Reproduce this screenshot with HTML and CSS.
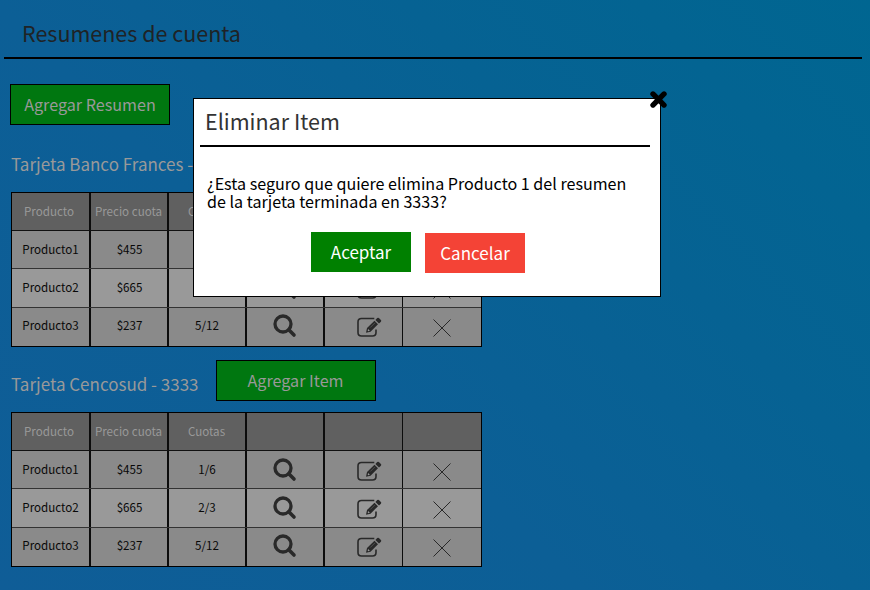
FILE: index.html
```html
<!DOCTYPE html>
<html lang="es">
<head>
<meta charset="utf-8">
<title>Resumenes de cuenta</title>
<link rel="stylesheet" href="styles.css">
</head>
<body>
<svg class="defs" aria-hidden="true">
  <symbol id="search" viewBox="0 0 24 24">
    <circle cx="10" cy="10" r="8" fill="none" stroke="currentColor" stroke-width="3.3"/>
    <path d="M15.8 15.8L21 21" stroke="currentColor" stroke-width="3.6" stroke-linecap="round"/>
  </symbol>
  <symbol id="edit" viewBox="0 0 25 20">
    <path d="M17.3 1.5H4.5Q1 1.5 1 5V15.500Q1 19 4.500 19H15.500Q19 19 19 15.500V12.500" fill="none" stroke="currentColor" stroke-width="1.600"/>
    <path d="M9 15.800L10 11L17.500 3.700L21 7.200L13.500 14.700Z" fill="currentColor"/>
    <path d="M18.400 2.900L20.200 1.100Q21 .3 21.900 1.100L23.900 3.100Q24.700 4 23.900 4.700L22 6.500Z" fill="currentColor"/>
    <path d="M11.200 12.100L12.800 13.700L11.300 14.200L10.700 13.600Z" fill="#999"/>
    <path d="M13.300 10.500L18 5.800" stroke="#777" stroke-width=".5"/>
  </symbol>
  <symbol id="cross" viewBox="0 0 18 18">
    <path d="M.5.5L17.500 17.500M17.500.5L.5 17.500" stroke="currentColor" stroke-width="1"/>
  </symbol>
</svg>
<main class="page">
  <header class="title"><h1>Resumenes de cuenta</h1></header>
  <button class="add add-summary">Agregar Resumen</button>
  <section class="card">
    <div class="card-head"><h2>Tarjeta Banco Frances -</h2></div>
    <div class="table">
      <div class="row head"><span>Producto</span><span>Precio cuota</span><span>Cuotas</span><span></span><span></span><span></span></div>
      <div class="row"><span>Producto1</span><span>$455</span><span></span><span><svg class="search"><use href="#search"/></svg></span><span><svg class="edit"><use href="#edit"/></svg></span><span><svg class="cross"><use href="#cross"/></svg></span></div>
      <div class="row even"><span>Producto2</span><span>$665</span><span></span><span><svg class="search"><use href="#search"/></svg></span><span><svg class="edit"><use href="#edit"/></svg></span><span><svg class="cross"><use href="#cross"/></svg></span></div>
      <div class="row last"><span>Producto3</span><span>$237</span><span>5/12</span><span><svg class="search"><use href="#search"/></svg></span><span><svg class="edit"><use href="#edit"/></svg></span><span><svg class="cross"><use href="#cross"/></svg></span></div>
    </div>
  </section>
  <section class="card second">
    <div class="card-head"><h2>Tarjeta Cencosud - 3333</h2><button class="add">Agregar Item</button></div>
    <div class="table">
      <div class="row head"><span>Producto</span><span>Precio cuota</span><span>Cuotas</span><span></span><span></span><span></span></div>
      <div class="row"><span>Producto1</span><span>$455</span><span>1/6</span><span><svg class="search"><use href="#search"/></svg></span><span><svg class="edit"><use href="#edit"/></svg></span><span><svg class="cross"><use href="#cross"/></svg></span></div>
      <div class="row even"><span>Producto2</span><span>$665</span><span>2/3</span><span><svg class="search"><use href="#search"/></svg></span><span><svg class="edit"><use href="#edit"/></svg></span><span><svg class="cross"><use href="#cross"/></svg></span></div>
      <div class="row last"><span>Producto3</span><span>$237</span><span>5/12</span><span><svg class="search"><use href="#search"/></svg></span><span><svg class="edit"><use href="#edit"/></svg></span><span><svg class="cross"><use href="#cross"/></svg></span></div>
    </div>
  </section>
</main>
<div class="modal" role="dialog">
  <svg class="close" viewBox="0 0 16 16"><path d="M2.800 2.800L13.200 13.200M13.200 2.800L2.800 13.200" stroke="#000" stroke-width="5" stroke-linecap="round"/></svg>
  <h3>Eliminar Item</h3>
  <p>¿Esta seguro que quiere elimina Producto 1 del resumen<br>de la tarjeta terminada en 3333?</p>
  <div class="actions"><button class="ok">Aceptar</button><button class="cancel">Cancelar</button></div>
</div>
</body>
</html>
```
FILE: styles.css
```css
* { box-sizing: border-box; }
body {
  margin: 0;
  height: 590px;
  overflow: hidden;
  font-family: "Noto Sans CJK SC", sans-serif;
  background: linear-gradient(45deg, #0f5d97, #0c5f96 40%, #066293 68%, #006691);
}
h1, h2, h3, p { margin: 0; font-weight: 400; white-space: nowrap; }
button { font: inherit; padding: 0; border: 0; white-space: nowrap; }
.defs { position: absolute; width: 0; height: 0; }
.title {
  height: 59px;
  margin: 0 8px 25px 4px;
  padding: 16px 0 0 18px;
  border-bottom: 2px solid #000;
}
.title h1 { font-size: 21.5px; line-height: 33px; color: #1f2326; }
.add {
  display: block;
  width: 160px;
  height: 41px;
  background: #007710;
  border: 1px solid #000;
  color: #999;
  font-size: 16.15px;
  line-height: 39px;
}
.add-summary { margin-left: 10px; }
.card { margin-left: 11px; }
.card-head { display: flex; height: 67px; align-items: center; gap: 17px; }
.card-head h2 { font-size: 17px; line-height: 26px; color: #999; padding-top: 10px; }
.second .card-head { height: 65px; }
.second h2 { padding-top: 8px; }
.card-head .add { margin-top: 2px; }
.table { width: 471px; height: 155px; border: 1px solid #000; }
.row {
  display: grid;
  grid-template-columns: 79px 78px 78px 78px 78px 78px;
  height: 38px;
  background: #8a8a8a;
  border-bottom: 1px solid #333;
  font-size: 11.6px;
  line-height: 36px;
  color: #080808;
}
.row.even { height: 39px; background: #999; }
.row.last { height: 38px; border-bottom: 0; line-height: 34px; }
.row.head { background: #606060; color: #999; border-color: #111; }
.row span { display: flex; justify-content: center; border-right: 2px solid #0c0c0c; }
.row span:nth-child(2) { padding-left: 1px; }
.row.head span:nth-child(1) { padding-right: 3px; }
.row.head span:nth-child(2) { padding: 0 1px 0 0; }
.row.head span:nth-child(3) { padding-right: 1px; }
.row span:nth-child(5) { border-right-width: 1px; }
.row span:last-child { border: 0; }
.row svg { color: #292929; }
.search { width: 24px; height: 24px; margin-top: 7px; }
.edit { width: 25px; height: 20px; margin: 10px 0 0 11px; }
.cross { width: 18px; height: 18px; margin: 12px 0 0; }
.last .search { margin-top: 6px; }
.last .edit { margin-top: 9px; }
.last .cross { margin-top: 11px; }
.modal {
  position: absolute;
  left: 193px;
  top: 98px;
  width: 468px;
  height: 199px;
  padding: 0 10px 0 6px;
  background: #fff;
  border: 1px solid #000;
}
.modal h3 {
  height: 48px;
  padding: 6px 0 0 5px;
  border-bottom: 2px solid #000;
  font-size: 21.5px;
  line-height: 31px;
  color: #333;
}
.modal p { margin: 27px 0 0 7px; font-size: 16.1px; line-height: 18px; }
.actions { display: flex; gap: 14px; margin: 22px 0 0 111px; }
.actions button { width: 100px; height: 40px; color: #fff; font-size: 17px; line-height: 40px; }
.ok { background: #008000; }
.actions .cancel { background: #f44336; margin-top: 1px; }
.close { position: absolute; right: -7px; top: -8px; width: 17px; height: 17px; }
```
